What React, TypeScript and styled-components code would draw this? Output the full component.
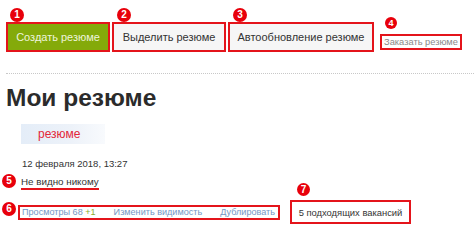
import React from "react";
import styled, { createGlobalStyle } from "styled-components";

const Global = createGlobalStyle`
  html, body { margin: 0; padding: 0; background: #fff; }
  body { font-family: "Liberation Sans", Arial, sans-serif; color: #333; width: 474px; height: 238px; overflow: hidden; white-space: nowrap; }
`;

const Page = styled.div`
  padding: 0 0 0 6px;
`;

const Toolbar = styled.div`
  display: flex;
  align-items: center;
  gap: 2px;
  padding-top: 22px;
`;

const Item = styled.div`
  position: relative;
`;

const Button = styled.div<{ $w: number; $primary?: boolean }>`
  box-sizing: border-box;
  width: ${(p) => p.$w}px;
  height: 30px;
  display: flex;
  align-items: center;
  justify-content: center;
  border: 2px solid #e4141b;
  background: ${(p) => (p.$primary ? "#84aa0a" : "#f6f6f6")};
  color: ${(p) => (p.$primary ? "#eef4dc" : "#333")};
  font-size: 11px;
`;

const LinkBox = styled.div`
  box-sizing: border-box;
  margin-left: 4px;
  margin-top: 10px;
  height: 16px;
  width: 82px;
  display: flex;
  align-items: center;
  justify-content: center;
  border: 2px solid #e4141b;
  color: #8a8a8a;
  font-size: 9.3px;
`;

const Badge = styled.span<{ $x: number; $y: number; $d?: number }>`
  position: absolute;
  left: ${(p) => p.$x}px;
  top: ${(p) => p.$y}px;
  width: ${(p) => p.$d ?? 14}px;
  height: ${(p) => p.$d ?? 14}px;
  border-radius: 50%;
  background: #e8000b;
  color: #fff;
  font-size: ${(p) => ((p.$d ?? 14) > 12 ? 10 : 9)}px;
  font-weight: bold;
  display: flex;
  align-items: center;
  justify-content: center;
  line-height: 1;
`;

const Divider = styled.div`
  margin-top: 21px;
  border-top: 1px dotted #c8c8c8;
`;

const Title = styled.h1`
  margin: 8px 0 0 0;
  font-size: 24.5px;
  font-weight: bold;
  color: #2b2b2b;
  line-height: 32px;
`;

const Tag = styled.div`
  margin: 10px 0 0 15px;
  width: 84px;
  height: 20px;
  box-sizing: border-box;
  padding-left: 17px;
  display: flex;
  align-items: center;
  background: linear-gradient(90deg, #e4edf8 0%, #edf2f9 60%, #f8fafd 100%);
  color: #e3263a;
  font-size: 12px;
`;

const DateLine = styled.div`
  margin: 14px 0 0 16px;
  font-size: 9.5px;
  color: #333;
`;

const Row = styled.div`
  position: relative;
  display: flex;
  align-items: center;
`;

const Hidden = styled.div`
  margin: 7px 0 0 15px;
  font-size: 9.8px;
  color: #333;
  padding-bottom: 1px;
  border-bottom: 2px solid #e4141b;
  width: 78px;
`;

const Bottom = styled.div`
  position: relative;
  display: flex;
  align-items: center;
  margin-top: 10px;
`;

const LinksBox = styled.div`
  box-sizing: border-box;
  margin-left: 12px;
  width: 262px;
  height: 15px;
  border: 2px solid #e4141b;
  display: flex;
  align-items: center;
  gap: 18px;
  padding-left: 2px;
  font-size: 9.1px;
  color: #7497c4;
`;

const Plus = styled.span`
  color: #8aae2c;
`;

const Vacancies = styled.div`
  box-sizing: border-box;
  margin-left: 10px;
  width: 121px;
  height: 24px;
  border: 2px solid #e4141b;
  display: flex;
  align-items: center;
  justify-content: center;
  font-size: 9.4px;
  color: #333;
`;

export default function App() {
  return (
    <>
      <Global />
      <Page>
        <Toolbar>
          <Item>
            <Button $w={104} $primary>Создать резюме</Button>
            <Badge $x={4} $y={-14}>1</Badge>
          </Item>
          <Item>
            <Button $w={114}>Выделить резюме</Button>
            <Badge $x={5} $y={-14}>2</Badge>
          </Item>
          <Item>
            <Button $w={146}>Автообновление резюме</Button>
            <Badge $x={5} $y={-14}>3</Badge>
          </Item>
          <Item>
            <LinkBox>Заказать резюме</LinkBox>
            <Badge $x={9} $y={-7} $d={12}>4</Badge>
          </Item>
        </Toolbar>
        <Divider />
        <Title>Мои резюме</Title>
        <Tag>резюме</Tag>
        <DateLine>12 февраля 2018, 13:27</DateLine>
        <Row>
          <Badge $x={-4} $y={5}>5</Badge>
          <Hidden>Не видно никому</Hidden>
        </Row>
        <Bottom>
          <Badge $x={-4} $y={2}>6</Badge>
          <LinksBox>
            <span>
              Просмотры 68 <Plus>+1</Plus>
            </span>
            <span>Изменить видимость</span>
            <span>Дублировать</span>
          </LinksBox>
          <Item>
            <Vacancies>5 подходящих вакансий</Vacancies>
            <Badge $x={17} $y={-17} $d={13}>7</Badge>
          </Item>
        </Bottom>
      </Page>
    </>
  );
}
